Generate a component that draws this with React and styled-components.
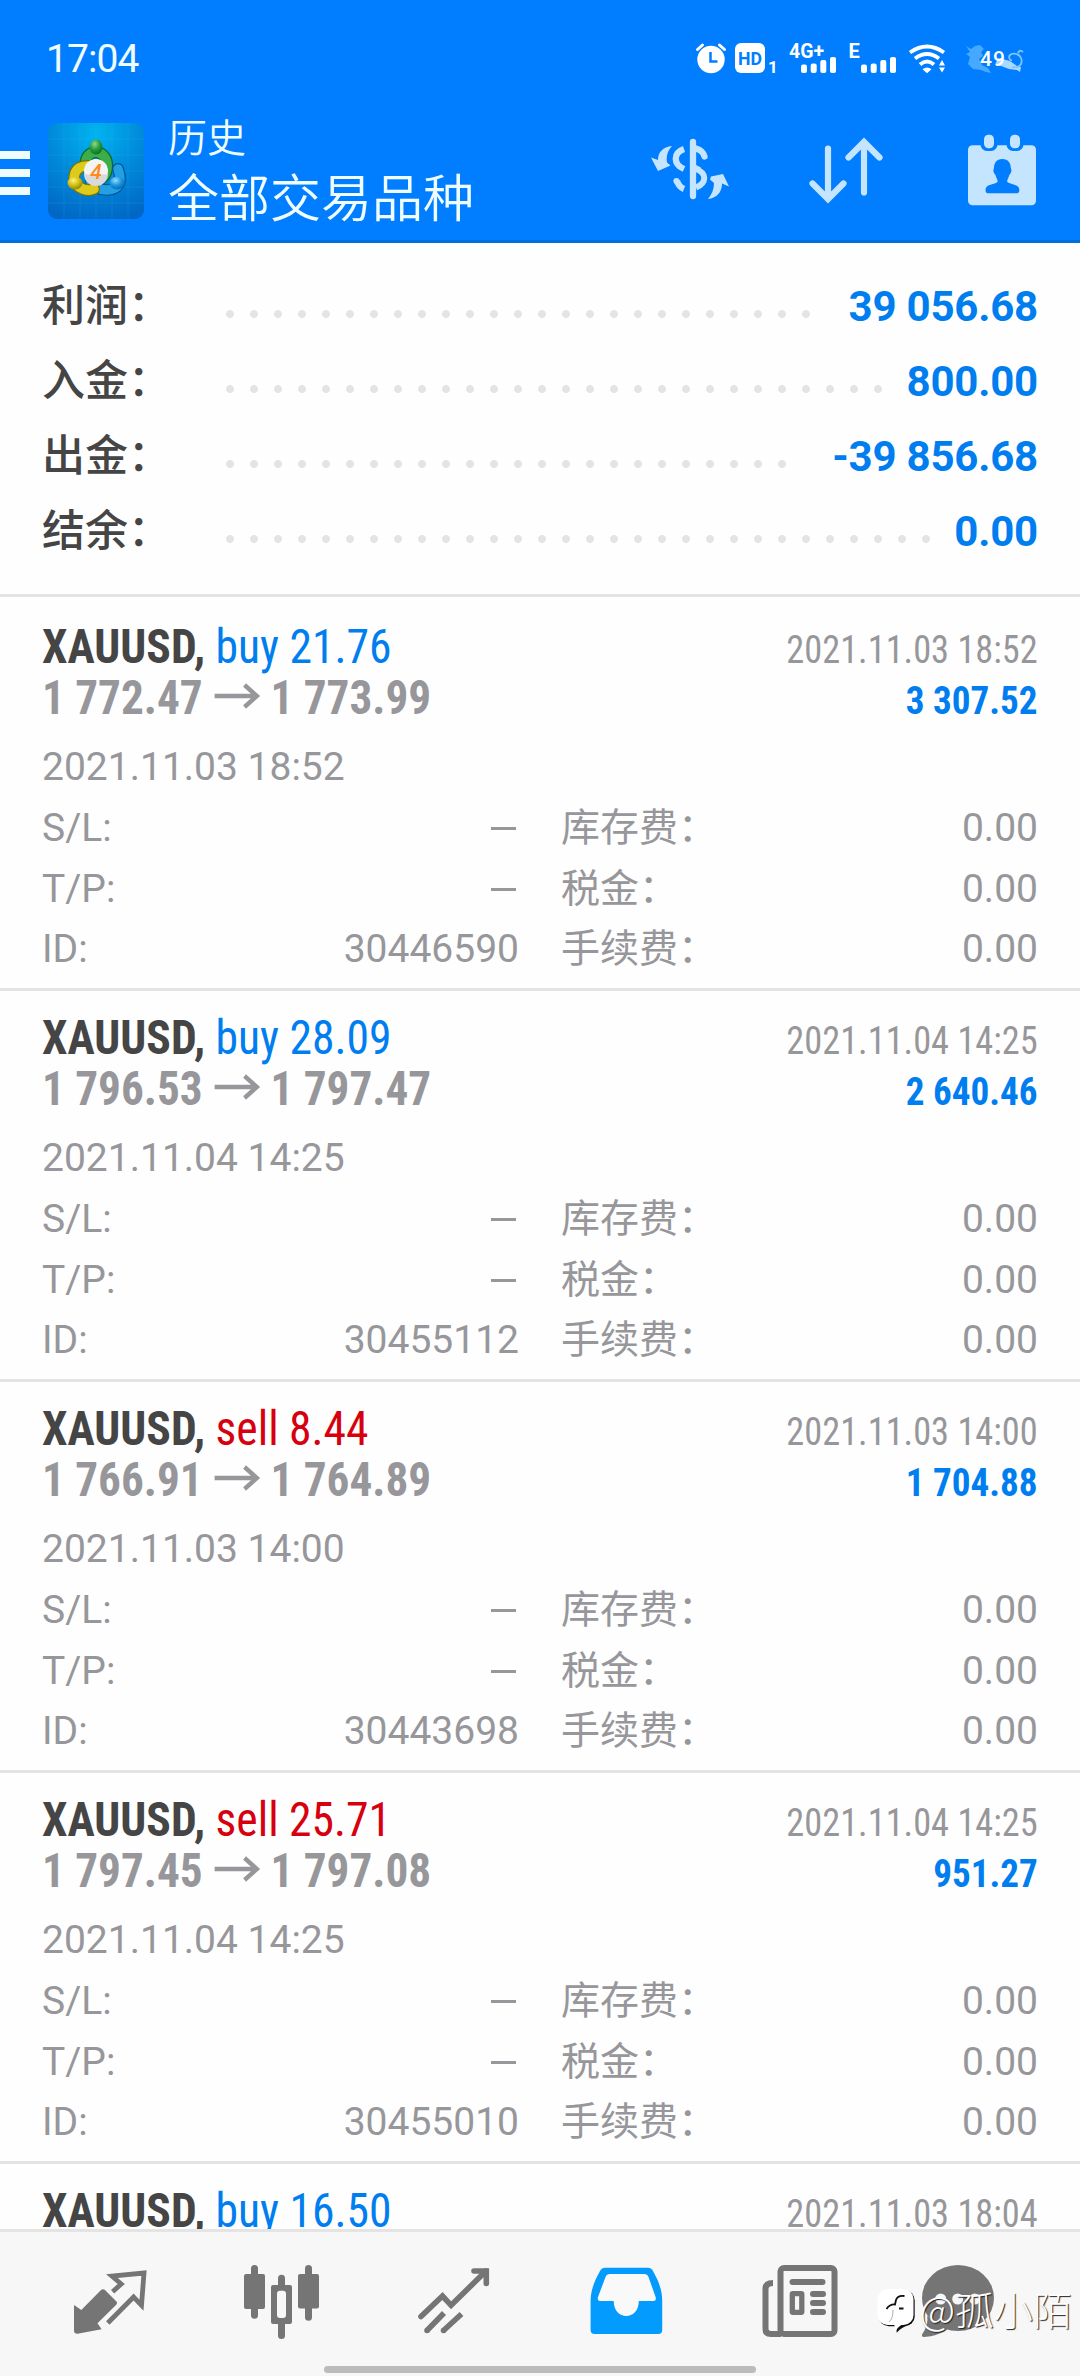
import styled, { createGlobalStyle } from 'styled-components';

const BLUE = '#007eff';
const TEXT_BLUE = '#007ef0';
const RED = '#d6000f';
const GREY = '#97979b';
const LINE = '#e4e4e4';
const ICON = '#757575';
const PALE = '#c5e5ff';

const GlobalStyle = createGlobalStyle`
  * {
    box-sizing: border-box;
  }

  body {
    background: #fefefe;
    font-family: Roboto, 'Noto Sans CJK SC', sans-serif;
    margin: 0;
  }
`;

const Screen = styled.div`
  display: flex;
  flex-direction: column;
  height: 2376px;
  overflow: hidden;
  width: 1080px;
`;

const Header = styled.header`
  background: ${BLUE};
  border-bottom: 3px solid #006fdb;
  color: #f0fdff;
  flex: none;
  height: 243px;
`;

const StatusBar = styled.div`
  align-items: center;
  display: flex;
  height: 116px;
  justify-content: space-between;
  padding: 0 45px 0 46px;
`;

const Clock = styled.span`
  font-size: 39px;
  letter-spacing: -0.9px;
  line-height: 44px;
  padding-top: 1px;
`;

const TitleBar = styled.div`
  align-items: flex-start;
  display: flex;
  height: 124px;
  padding-top: 7px;
`;

const Burger = styled.div`
  display: flex;
  flex-direction: column;
  gap: 10px;
  margin-right: 18px;
  padding-top: 28px;
  width: 30px;
`;

const BurgerLine = styled.span`
  background: #effdff;
  height: 8px;
`;

const Titles = styled.div`
  display: flex;
  flex: 1;
  flex-direction: column;
  margin: -7px 0 0 24px;
`;

const Title = styled.span`
  font-size: 39px;
  font-weight: 350;
  line-height: 46px;
`;

const Subtitle = styled.span`
  font-size: 51px;
  font-weight: 350;
  line-height: 76px;
`;

const Actions = styled.div`
  display: flex;
  gap: 60px;
  margin: -1px 30px 0 0;
`;

const Summary = styled.section`
  border-bottom: 3px solid ${LINE};
  flex: none;
  height: 354px;
  padding: 26px 42px 0;
`;

const SummaryRow = styled.div`
  display: flex;
  height: 75px;
  line-height: 75px;
`;

const SummaryLabel = styled.span`
  color: #454545;
  font-size: 43px;
  font-weight: 500;
  width: 176px;
`;

const Leader = styled.span`
  background: radial-gradient(circle, ${LINE} 3.6px, transparent 4.2px) 0 0 / 24px 24px repeat-x;
  height: 24px;
  margin-top: 33px;
  width: ${({ $dots }) => $dots * 24}px;
`;

const SummaryValue = styled.span`
  color: ${TEXT_BLUE};
  font-size: 42px;
  font-weight: 700;
  letter-spacing: -0.2px;
  margin-left: auto;
`;

const Trades = styled.main`
  flex: 1;
  overflow: hidden;
  padding-top: 3px;
`;

const Trade = styled.article`
  border-bottom: 3px solid ${LINE};
  color: ${GREY};
  height: 391px;
  padding: 21px 42px 0;
`;

const Line = styled.div`
  align-items: baseline;
  display: flex;
  font-family: 'Roboto Condensed', Roboto, sans-serif;
  font-size: 48px;
  font-stretch: 75%;
  height: 51px;
  justify-content: space-between;
  line-height: 51px;
  white-space: pre;
`;

const Order = styled.span`
  transform: scaleX(0.949);
  transform-origin: left;
`;

const Symbol = styled.b`
  color: #454545;
`;

const Side = styled.span`
  color: ${({ $sell }) => ($sell ? RED : TEXT_BLUE)};
`;

const Prices = styled.b`
  align-items: baseline;
  display: flex;
  transform: scaleX(0.942);
  transform-origin: left;
`;

const Arrow = styled.svg`
  margin: 0 11px 0 12px;
`;

const Closed = styled.span`
  font-size: 39px;
  transform: scaleX(0.932);
  transform-origin: right;
`;

const Profit = styled.b`
  color: ${TEXT_BLUE};
  font-size: 39px;
  transform: scaleX(0.952);
  transform-origin: right;
`;

const Opened = styled.div`
  font-size: 39px;
  height: 54px;
  line-height: 46px;
  margin-top: 21px;
`;

const Details = styled.dl`
  column-gap: 42px;
  display: grid;
  font-size: 39px;
  grid-template-columns: 477px 477px;
  grid-template-rows: repeat(3, 60.7px);
  line-height: 60px;
  margin: 0;
`;

const Detail = styled.div`
  display: flex;
  justify-content: space-between;
`;

const Value = styled.dd`
  margin: 0;
`;

const Dash = styled.dd`
  align-self: center;
  background: ${GREY};
  height: 3px;
  margin: 0 3px 0 0;
  width: 25px;
`;

const TabBar = styled.nav`
  align-content: flex-start;
  background: #f7f7f7;
  border-top: 3px solid ${LINE};
  display: flex;
  flex: none;
  flex-wrap: wrap;
  height: 147px;
  padding: 0 24px;
  position: relative;
`;

const Tab = styled.div`
  display: flex;
  height: 134px;
  justify-content: center;
  padding-top: 20px;
  width: 172px;
`;

const HomeBar = styled.div`
  background: #bbb;
  border-radius: 4px;
  height: 7px;
  margin: 0 auto;
  width: 432px;
`;

const Watermark = styled.div`
  align-items: center;
  bottom: 32px;
  color: #fff;
  display: flex;
  font-size: 39px;
  font-weight: 300;
  gap: 4px;
  line-height: 60px;
  position: absolute;
  right: 8px;
  text-shadow: 1px 1px 1px #222;
`;

const WatermarkText = styled.span`
  font-family: 'Noto Sans CJK SC', sans-serif;
  padding-bottom: 6px;
`;

const summary = [
  { label: '利润：', value: '39 056.68', dots: 25 },
  { label: '入金：', value: '800.00', dots: 28 },
  { label: '出金：', value: '-39 856.68', dots: 24 },
  { label: '结余：', value: '0.00', dots: 30 },
];

const trades = [
  { id: '30446590', side: 'buy', volume: '21.76', from: '1 772.47', to: '1 773.99', closed: '2021.11.03 18:52', opened: '2021.11.03 18:52', profit: '3 307.52' },
  { id: '30455112', side: 'buy', volume: '28.09', from: '1 796.53', to: '1 797.47', closed: '2021.11.04 14:25', opened: '2021.11.04 14:25', profit: '2 640.46' },
  { id: '30443698', side: 'sell', volume: '8.44', from: '1 766.91', to: '1 764.89', closed: '2021.11.03 14:00', opened: '2021.11.03 14:00', profit: '1 704.88' },
  { id: '30455010', side: 'sell', volume: '25.71', from: '1 797.45', to: '1 797.08', closed: '2021.11.04 14:25', opened: '2021.11.04 14:25', profit: '951.27' },
  { side: 'buy', volume: '16.50', closed: '2021.11.03 18:04' },
];

const Bars = ({ x }) => (
  <g>
    <rect x={x} y="28.5" width="6" height="8.5" rx="2" />
    <rect x={x + 9.7} y="27.5" width="6" height="9.5" rx="2" />
    <rect x={x + 19.3} y="24" width="6" height="13" rx="2" />
    <rect x={x + 29} y="21" width="6" height="16" rx="2" />
  </g>
);

const StatusIcons = () => (
  <svg width="345" height="44" viewBox="0 0 345 44" fill="#fff" fontFamily="Roboto, sans-serif" fontWeight="700">
    <circle cx="21" cy="23.5" r="13.7" />
    <path d="M7.5 13.5l5-4.5M34.5 13.5l-5-4.5" stroke="#fff" strokeWidth="3" strokeLinecap="round" />
    <path d="M20.5 16v9.5h7" fill="none" stroke={BLUE} strokeWidth="2.5" />
    <rect x="45" y="7" width="30" height="30" rx="6" />
    <text x="48" y="28.5" fontSize="18.5" fill={BLUE} textLength="24" lengthAdjust="spacingAndGlyphs">HD</text>
    <text x="78" y="36.5" fontSize="17">1</text>
    <text x="99" y="22" fontSize="20" textLength="35" lengthAdjust="spacingAndGlyphs">4G+</text>
    <Bars x={111} />
    <text x="158.5" y="22" fontSize="20">E</text>
    <Bars x={171} />
    <g fill="none" stroke="#fff" strokeWidth="3.8">
      <path d="M220 16.5q17-12 34 0" />
      <path d="M225 22.5q12-9 24 0" />
      <path d="M230 28.5q7-6 14 0" />
    </g>
    <path d="M232.5 33.200q4.500-3.500 9 0l-4.500 4z" />
    <path d="M249 29.500l3-5.500 3 5.500zM249 31.500h6l-3 5z" />
    <path d="M276 10l5 3 4-3 5-1 4 4-3 3 2 4-4 3 3 6 6 3 3 5-5-1-5-2-8-1-5-5 2-7-4-3 4-2z" fill="#46a8ff" />
    <path d="M308 22l12 3 7 5 4 1-1 5-3-2-8-1-8-3-6-1z" fill="#a9d9ff" />
    <path d="M322 31c8 2 11-4 9-9s-9-5-11-3 0 6 2 5M328 17q2-4 5-1" fill="none" stroke="#7cc4ff" strokeWidth="1.8" />
    <text x="290" y="29.5" fontSize="21" fontWeight="500" textLength="25">49</text>
  </svg>
);

const AppLogo = () => (
  <svg width="96" height="96" viewBox="0 0 96 96">
    <defs>
      <radialGradient id="tile" cx="0.5" cy="0.1" r="0.95">
        <stop offset="0" stopColor="#00b4f0" />
        <stop offset="0.5" stopColor="#008ada" />
        <stop offset="1" stopColor="#0067c4" />
      </radialGradient>
      <radialGradient id="green" cx="0.4" cy="0.3" r="0.8">
        <stop offset="0" stopColor="#8fd98c" />
        <stop offset="0.5" stopColor="#239a3d" />
        <stop offset="1" stopColor="#08641f" />
      </radialGradient>
      <radialGradient id="yellow" cx="0.4" cy="0.3" r="0.8">
        <stop offset="0" stopColor="#fff27a" />
        <stop offset="0.5" stopColor="#d0bd12" />
        <stop offset="1" stopColor="#827600" />
      </radialGradient>
      <radialGradient id="azure" cx="0.4" cy="0.3" r="0.8">
        <stop offset="0" stopColor="#8fdcff" />
        <stop offset="0.5" stopColor="#1c93dc" />
        <stop offset="1" stopColor="#0060a8" />
      </radialGradient>
    </defs>
    <rect width="96" height="96" rx="9" fill="url(#tile)" />
    <path d="M16 0v96M32 0v96M48 0v96M64 0v96M80 0v96M0 16h96M0 32h96M0 48h96M0 64h96M0 80h96" stroke="#5cc4ff" strokeOpacity="0.13" />
    <g fill="none" strokeLinecap="round">
      <path d="M38 44C34 24 62 24 59 46q-1 6-5 9" stroke="#0c6a25" strokeWidth="12" />
      <path d="M38 44C34 24 62 24 59 46q-1 6-5 9" stroke="#3bad4b" strokeWidth="9.5" />
      <path d="M70 46q7 20-11 21-11 0-16-8" stroke="#00589b" strokeWidth="12" />
      <path d="M70 46q7 20-11 21-11 0-16-8" stroke="#23a0e4" strokeWidth="9.5" />
      <path d="M40 43C26 42 22 57 31 64q8 5 15 2" stroke="#7d7200" strokeWidth="12" />
      <path d="M40 43C26 42 22 57 31 64q8 5 15 2" stroke="#dccb1b" strokeWidth="9.5" />
    </g>
    <ellipse cx="48" cy="24" rx="6.5" ry="7.5" fill="url(#green)" />
    <ellipse cx="27" cy="60" rx="7.5" ry="6.5" fill="url(#yellow)" />
    <ellipse cx="69" cy="60" rx="7.5" ry="6.5" fill="url(#azure)" />
    <circle cx="48" cy="48" r="12" fill="#f4f4f4" />
    <path d="M36 51a12 12 0 0 0 24 0q-12 2-24 0z" fill="#d9d9d9" />
    <text x="48" y="55.5" fontFamily="Roboto, sans-serif" fontSize="21" fontStyle="italic" fontWeight="500" fill="#ff8a1e" textAnchor="middle">4</text>
  </svg>
);

const SymbolsIcon = () => (
  <svg width="96" height="96" viewBox="0 0 96 96" fill={PALE}>
    <g fill="none" stroke={PALE} strokeWidth="6.3">
      <path d="M51 20v54" strokeLinecap="round" />
      <path d="M54 26.5q7 2 8.5 8" strokeLinecap="round" />
      <path d="M42 27c-11 4-11 15 0 20" />
      <path d="M54 47c11 4 11 14 0 18.500" strokeWidth="6" />
      <path d="M42 67q-5-2-7-8" />
    </g>
    <path d="M51 41.500l8 4-3 5-5-2z" />
    <circle cx="34.5" cy="59" r="3.1" />
    <path d="M30 24c-9 1-14 6-14 14l-7-2.500 7 13.500 12.500-5.500-3.500-3c-1-7 1-12 5-16.500z" />
    <path d="M66 77c9-1 14-7 14-15.500l7 3-6-12.500-12 2.500-1 3 4 3.500c0 6-2 11-6 16z" />
  </svg>
);

const SortIcon = () => (
  <svg width="96" height="96" viewBox="0 0 96 96" fill="none" stroke={PALE} strokeWidth="6.2" strokeLinecap="round">
    <path d="M30 26.5V77M14.5 61.5L30 77l15.5-15.5" />
    <path d="M66 70.5V20M50.5 35.5L66 20l15.5 15.5" />
  </svg>
);

const CalendarIcon = () => (
  <svg width="96" height="96" viewBox="0 0 96 96" fill={PALE}>
    <rect x="14" y="23.3" width="68" height="60" rx="4.5" />
    <rect x="26.5" y="10" width="17" height="19" rx="6.5" fill={BLUE} />
    <rect x="52.5" y="10" width="17" height="19" rx="6.5" fill={BLUE} />
    <rect x="30" y="12.7" width="10" height="13.5" rx="4.5" />
    <rect x="56" y="12.7" width="10" height="13.5" rx="4.5" />
    <path d="M48.300 37c6 0 8.500 4 8.500 9 1.500 3 0 5-1.500 7-1 4-2.500 5-2 7 4 3 12 2 12 8 0 3-1.500 3.300-3 3.300H34.500c-1.500 0-3-.5-3-3.300 0-6 8-5 12-8 .5-2-1-3-2-7-1.500-2-3-4-1.500-7 0-5 2.500-9 8.300-9z" fill={BLUE} />
  </svg>
);

const QuotesIcon = () => (
  <svg width="96" height="96" viewBox="0 0 96 96" fill={ICON}>
    <path d="M12 53l7.300 5L38.500 38.500q2.500-2.500 5 0L54 49q2 2 0 4L35.500 71.300l4.100 6-24.100 4.400q-3.500 0-3.500-3z" />
    <path d="M50.600 39.700l8.600-7.700-9.300-8L82 21l-2.500 32.300-7.900-8.300-25.800 26" fill="none" stroke={ICON} strokeWidth="4.8" />
  </svg>
);

const ChartsIcon = () => (
  <svg width="96" height="96" viewBox="0 0 96 96" fill={ICON}>
    <rect x="10" y="22" width="21" height="35" rx="2" />
    <rect x="17" y="13" width="7" height="53.7" rx="3.5" />
    <rect x="44" y="22.7" width="7" height="64.3" rx="3.5" />
    <rect x="37" y="33" width="21" height="39" rx="2" />
    <rect x="43" y="38.7" width="9" height="27.3" rx="3" fill="#f7f7f7" />
    <rect x="64" y="22" width="21" height="34.5" rx="2" />
    <rect x="71" y="13" width="7" height="55.7" rx="3.5" />
  </svg>
);

const TradeIcon = () => (
  <svg width="96" height="96" viewBox="0 0 96 96" fill="none" stroke={ICON} strokeWidth="5.6">
    <path d="M15 64.5l21.5-20.5 8.6 9.3L80 19" strokeLinecap="round" />
    <path d="M68 19h12.300v12.500" strokeLinecap="round" />
    <path d="M21 78.500l17-17.500M37.500 78.500L55.500 62" />
    <path d="M21 78.500h.1M37.500 78.500h.1" strokeLinecap="round" />
  </svg>
);

const HistoryIcon = () => (
  <svg width="96" height="96" viewBox="0 0 96 96">
    <path d="M27 15.700h43q3 0 5 3.300c5 9 9 18 9.200 29v30q0 4-4 4H16.600q-4 0-4-4V48c.4-11 4.400-20 9.400-29q2-3.300 5-3.300z" fill="#049bff" />
    <path d="M32 22h34q3.500 0 4.500 3L77.600 45q1 4-2 4H60.800c0 20-25.100 20-25.100 0H22q-3 0-2-4l7.500-20q1-3 4.500-3z" fill="#f9f9f9" />
  </svg>
);

const NewsIcon = () => (
  <svg width="96" height="96" viewBox="0 0 96 96" fill="none" stroke={ICON} strokeWidth="6">
    <rect x="30.5" y="16" width="54" height="66" rx="3.5" />
    <path d="M23 31q-7.500 0-7.500 6v40q0 5 5.500 5h10" />
    <path d="M42.500 30h30M63 42h10M63 51h10M63 60h10" strokeLinecap="round" />
    <rect x="42.3" y="41.7" width="9.5" height="18.6" rx="0.5" strokeWidth="5.3" />
  </svg>
);

const MessagesIcon = () => (
  <svg width="96" height="96" viewBox="0 0 96 96" fill={ICON}>
    <ellipse cx="36" cy="46" rx="36" ry="33" />
    <path d="M5 64q2 8-5 18.500-.5 2.500 2 2.500 14-1 24-8z" />
    <g fill="#f7f7f7">
      <circle cx="18.7" cy="47" r="5.5" />
      <circle cx="35.7" cy="47" r="5.5" />
      <circle cx="52.7" cy="47" r="5.5" />
    </g>
  </svg>
);

const WatermarkLogo = () => (
  <svg width="39" height="46" viewBox="0 0 39 46">
    <g fill="#111" transform="translate(1.2 1.2)">
      <rect x="0.5" y="1" width="36" height="36" rx="10" />
      <path d="M18 36h12q-7 2-11.500 7.500z" />
    </g>
    <g fill="#fff">
      <rect x="0.5" y="1" width="36" height="36" rx="10" />
      <path d="M17 35h12q-7 2-10.500 8z" />
    </g>
    <path d="M27.5 8q-7-1-8.500 4l-1 4.500q-5-.5-8.500 4.500M22 20.500h4.500" fill="none" stroke="#111" strokeWidth="1.8" />
    <path d="M16 22q0 9-4 12" fill="none" stroke="#999" strokeWidth="0.8" />
  </svg>
);

const TradeItem = ({ id, side, volume, from, to, closed, opened, profit }) => (
  <Trade>
    <Line>
      <Order>
        <Symbol>XAUUSD, </Symbol>
        <Side $sell={side === 'sell'}>{`${side} ${volume}`}</Side>
      </Order>
      <Closed>{closed}</Closed>
    </Line>

    {id && (
      <>
        <Line>
          <Prices>
            {from}
            <Arrow width="49" height="32" viewBox="0 0 49 32" fill="none" stroke={GREY} strokeWidth="4.6">
              <path d="M0 14h45M32 3l13 11-13 11" />
            </Arrow>
            {to}
          </Prices>
          <Profit>{profit}</Profit>
        </Line>
        <Opened>{opened}</Opened>
        <Details>
          <Detail><dt>S/L:</dt><Dash /></Detail>
          <Detail><dt>库存费：</dt><Value>0.00</Value></Detail>
          <Detail><dt>T/P:</dt><Dash /></Detail>
          <Detail><dt>税金：</dt><Value>0.00</Value></Detail>
          <Detail><dt>ID:</dt><Value>{id}</Value></Detail>
          <Detail><dt>手续费：</dt><Value>0.00</Value></Detail>
        </Details>
      </>
    )}
  </Trade>
);

const tabs = [QuotesIcon, ChartsIcon, TradeIcon, HistoryIcon, NewsIcon, MessagesIcon];

const App = () => (
  <Screen lang="zh-CN">
    <GlobalStyle />

    <Header>
      <StatusBar>
        <Clock>17:04</Clock>
        <StatusIcons />
      </StatusBar>
      <TitleBar>
        <Burger>
          <BurgerLine />
          <BurgerLine />
          <BurgerLine />
        </Burger>
        <AppLogo />
        <Titles>
          <Title>历史</Title>
          <Subtitle>全部交易品种</Subtitle>
        </Titles>
        <Actions>
          <SymbolsIcon />
          <SortIcon />
          <CalendarIcon />
        </Actions>
      </TitleBar>
    </Header>

    <Summary>
      {summary.map(({ label, value, dots }) => (
        <SummaryRow key={label}>
          <SummaryLabel>{label}</SummaryLabel>
          <Leader $dots={dots} />
          <SummaryValue>{value}</SummaryValue>
        </SummaryRow>
      ))}
    </Summary>

    <Trades>
      {trades.map((trade) => (
        <TradeItem key={trade.volume} {...trade} />
      ))}
    </Trades>

    <TabBar>
      {tabs.map((Icon, index) => (
        <Tab key={index}>
          <Icon />
        </Tab>
      ))}
      <HomeBar />
      <Watermark>
        <WatermarkLogo />
        <WatermarkText>@孤小陌</WatermarkText>
      </Watermark>
    </TabBar>
  </Screen>
);

export default App;
